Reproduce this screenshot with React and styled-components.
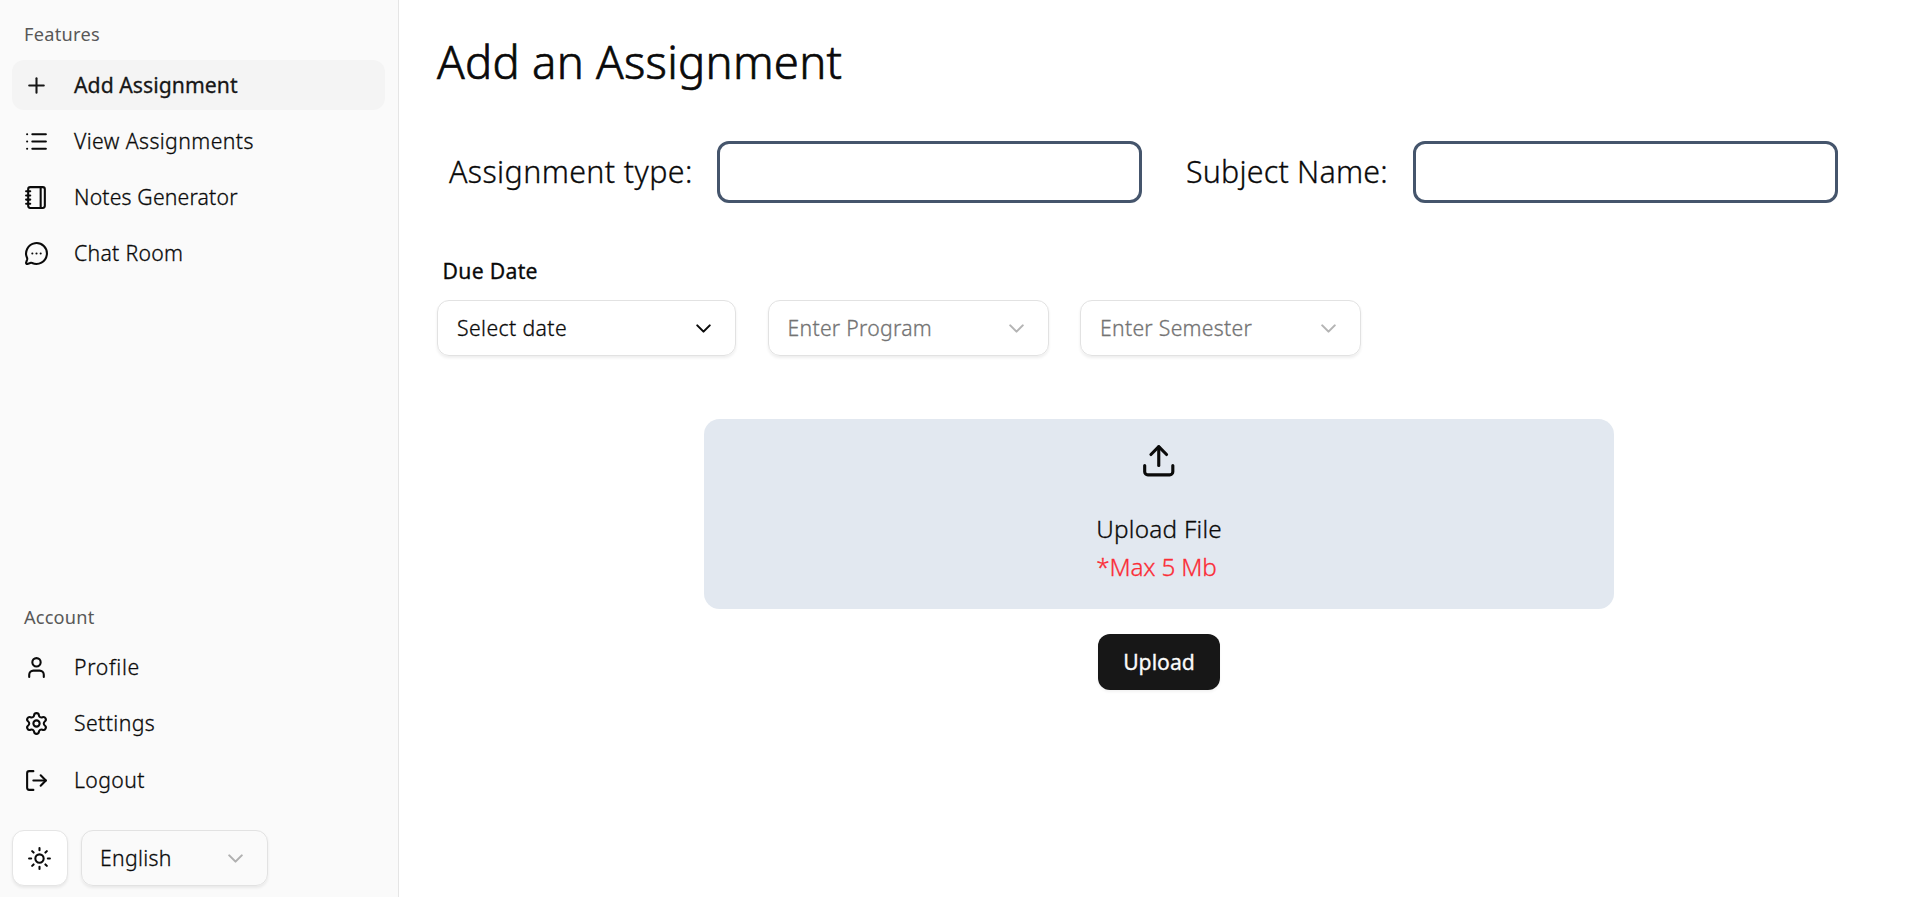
import React from "react";
import styled, { createGlobalStyle } from "styled-components";
import {
  Plus, List, Notebook, MessageCircleMore, User, Settings, LogOut, Sun, ChevronDown, Upload,
} from "lucide-react";

const GlobalStyle = createGlobalStyle`
  *, *::before, *::after { box-sizing: border-box; }
  body {
    margin: 0;
    background: #fff;
    color: #0a0a0a;
    font-family: "Noto Sans", sans-serif;
    font-size: 21.2px;
    font-weight: 300;
    -webkit-text-stroke: 0.3px currentColor;
  }
  button, input { font: inherit; color: inherit; margin: 0; }
  svg { flex-shrink: 0; display: block; }
`;

const Layout = styled.div`
  display: flex;
  height: 100vh;
  overflow: hidden;
`;

const Sidebar = styled.aside`
  width: 399px;
  flex-shrink: 0;
  display: flex;
  flex-direction: column;
  padding: 9px 13px 11px 12px;
  background: #fafafa;
  border-right: 1px solid #e5e5e5;
`;

const NavGroup = styled.nav`
  display: flex;
  flex-direction: column;
  margin-top: ${(p) => (p.$bottom ? "auto" : "0")};
`;

const GroupLabel = styled.div`
  height: 51px;
  padding: 0 12px;
  font-size: 18.2px;
  font-weight: 400;
  line-height: 50px;
  letter-spacing: ${(p) => p.$track}px;
  color: #585858;
  -webkit-text-stroke-width: 0;
`;

const NavItems = styled.div`
  display: flex;
  flex-direction: column;
  gap: 6.25px;
`;

const NavItem = styled.a`
  display: flex;
  align-items: center;
  gap: 25px;
  height: 50px;
  padding: 0 12px;
  border-radius: 12px;
  background: ${(p) => (p.$active ? "#f4f4f4" : "transparent")};
  color: ${(p) => (p.$active ? "#171717" : "#0a0a0a")};
  font-weight: ${(p) => (p.$active ? 400 : 300)};
`;

const NavText = styled.span`
  line-height: 28px;
  padding-bottom: 1px;
  letter-spacing: ${(p) => p.$track}px;
`;

const SidebarFooter = styled.div`
  display: flex;
  gap: 12.5px;
  margin-top: 25px;
`;

const ThemeButton = styled.button`
  display: flex;
  align-items: center;
  justify-content: center;
  width: 56px;
  height: 56px;
  padding: 0 1px 0 0;
  border: 1px solid #e5e5e5;
  border-radius: 12px;
  background: #fff;
  box-shadow: 0 2px 3px rgba(0, 0, 0, 0.07);
`;

const Select = styled.button`
  display: flex;
  align-items: center;
  justify-content: space-between;
  width: ${(p) => p.$width}px;
  height: 56px;
  padding: 0 19px 0 ${(p) => p.$start || 19}px;
  border: 1px solid #e2e2e2;
  border-radius: 12px;
  background: transparent;
  box-shadow: 0 2px 3px rgba(0, 0, 0, 0.07);
  color: ${(p) => (p.$placeholder ? "#737373" : "#0a0a0a")};
  letter-spacing: ${(p) => p.$track}px;
  line-height: 28px;

  svg {
    color: #0a0a0a;
    opacity: ${(p) => (p.$strong ? 1 : 0.3)};
  }
`;

const Main = styled.main`
  flex: 1;
  display: flex;
  flex-direction: column;
  padding: 33px 34px 0 38px;
`;

const Title = styled.h1`
  margin: 0;
  font-size: 45.5px;
  font-weight: 300;
  line-height: 56px;
  letter-spacing: 0.25px;
  -webkit-text-stroke-width: 0.7px;
`;

const DetailsRow = styled.div`
  display: flex;
  margin-top: 52px;
  padding: 0 43px 0 12px;
  justify-content: space-between;
`;

const Field = styled.label`
  display: flex;
  align-items: center;
  justify-content: space-between;
  width: ${(p) => p.$width}px;
`;

const FieldLabel = styled.span`
  font-size: 30.4px;
  line-height: 44px;
  letter-spacing: ${(p) => p.$track}px;
  white-space: nowrap;
`;

const TextInput = styled.input`
  width: 425px;
  height: 62px;
  padding: 0 16px;
  border: 3px solid #45556c;
  border-radius: 12px;
  background: transparent;
  outline: none;
`;

const DueLabel = styled.div`
  margin-top: 53px;
  padding-left: 5.5px;
  height: 44px;
  font-weight: 400;
  line-height: 29px;
  letter-spacing: 0.3px;
`;

const SelectRow = styled.div`
  display: flex;
  gap: 31.5px;
`;

const UploadArea = styled.section`
  display: flex;
  flex-direction: column;
  align-items: center;
  gap: 25px;
  margin-top: 63px;
`;

const DropZone = styled.div`
  display: flex;
  flex-direction: column;
  align-items: center;
  width: 910px;
  height: 190px;
  padding-top: 23px;
  border-radius: 15.6px;
  background: #e2e8f0;
`;

const DropText = styled.div`
  width: 125.5px;
  margin-top: 30px;
  font-size: 24.3px;
  line-height: 38px;
  white-space: nowrap;
`;

const DropLine = styled.div`
  letter-spacing: ${(p) => p.$track}px;
  color: ${(p) => (p.$warn ? "#fb2c36" : "#0a0a0a")};
`;

const UploadButton = styled.button`
  width: 122px;
  height: 56px;
  padding: 0 0 2px;
  border: 0;
  border-radius: 12px;
  background: #171717;
  box-shadow: 0 2px 3px rgba(0, 0, 0, 0.05);
  color: #fafafa;
  font-weight: 400;
`;

const features = [
  { icon: Plus, label: "Add Assignment", track: 0.04, active: true },
  { icon: List, label: "View Assignments", track: 0.42 },
  { icon: Notebook, label: "Notes Generator", track: 0.18 },
  { icon: MessageCircleMore, label: "Chat Room", track: 0.3 },
];

const account = [
  { icon: User, label: "Profile", track: 0.7 },
  { icon: Settings, label: "Settings", track: 0.42 },
  { icon: LogOut, label: "Logout", track: 0.41 },
];

function NavList({ items }) {
  return (
    <NavItems>
      {items.map(({ icon: Icon, label, track, active }) => (
        <NavItem key={label} $active={active}>
          <Icon size={25} />
          <NavText $track={track}>{label}</NavText>
        </NavItem>
      ))}
    </NavItems>
  );
}

export default function App() {
  return (
    <>
      <GlobalStyle />
      <Layout>
        <Sidebar>
          <NavGroup>
            <GroupLabel $track={0.27}>Features</GroupLabel>
            <NavList items={features} />
          </NavGroup>
          <NavGroup $bottom>
            <GroupLabel $track={0.18}>Account</GroupLabel>
            <NavList items={account} />
          </NavGroup>
          <SidebarFooter>
            <ThemeButton aria-label="Toggle theme"><Sun size={25} /></ThemeButton>
            <Select $width={187} $start={18.5} $track={0.3}>
              English
              <ChevronDown size={25} />
            </Select>
          </SidebarFooter>
        </Sidebar>
        <Main>
          <Title>Add an Assignment</Title>
          <DetailsRow>
            <Field $width={693}>
              <FieldLabel $track={0.38}>Assignment type:</FieldLabel>
              <TextInput />
            </Field>
            <Field $width={652}>
              <FieldLabel $track={0.2}>Subject Name:</FieldLabel>
              <TextInput />
            </Field>
          </DetailsRow>
          <DueLabel>Due Date</DueLabel>
          <SelectRow>
            <Select $width={299} $track={0.4} $strong>
              Select date
              <ChevronDown size={25} />
            </Select>
            <Select $width={281} $track={0.28} $placeholder>
              Enter Program
              <ChevronDown size={25} />
            </Select>
            <Select $width={281} $track={0.28} $placeholder>
              Enter Semester
              <ChevronDown size={25} />
            </Select>
          </SelectRow>
          <UploadArea>
            <DropZone>
              <Upload size={37.5} />
              <DropText>
                <DropLine $track={0.25}>Upload File</DropLine>
                <DropLine $track={-0.19} $warn>*Max 5 Mb</DropLine>
              </DropText>
            </DropZone>
            <UploadButton>Upload</UploadButton>
          </UploadArea>
        </Main>
      </Layout>
    </>
  );
}
